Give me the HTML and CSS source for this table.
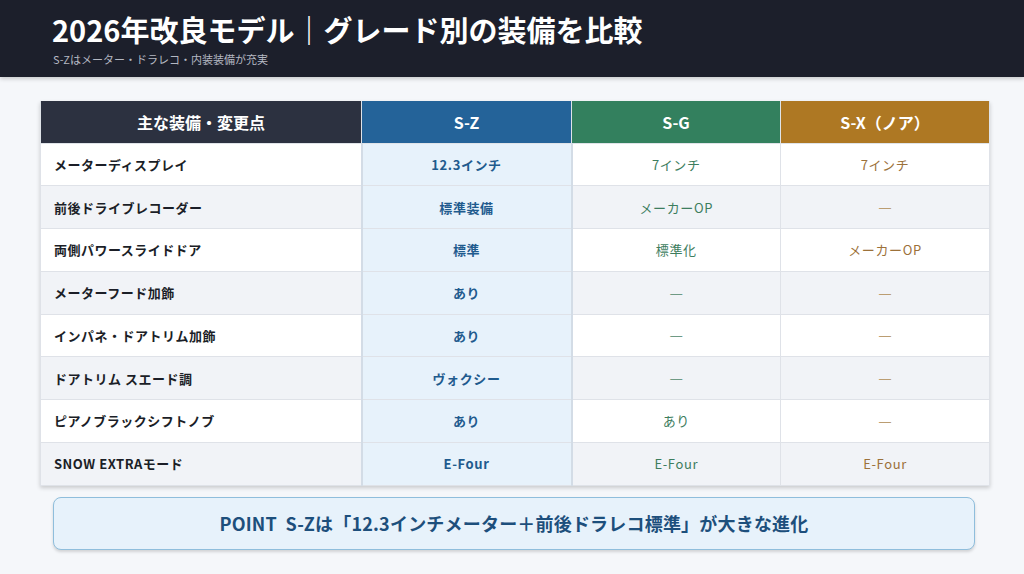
FILE: index.html
```html
<!DOCTYPE html>
<html lang="ja">
<head>
<meta charset="utf-8">
<link rel="stylesheet" href="styles.css">
</head>
<body>
<header class="top">
  <h1 class="title">2026年改良モデル｜グレード別の装備を比較</h1>
  <p class="sub">S-Zはメーター・ドラレコ・内装装備が充実</p>
</header>
<main class="main">
  <table class="cmp">
    <colgroup><col class="c1"><col class="c2"><col class="c3"><col class="c4"></colgroup>
    <thead>
      <tr><th class="h-l">主な装備・変更点</th><th class="h-z">S-Z</th><th class="h-g">S-G</th><th class="h-x">S-X（ノア）</th></tr>
    </thead>
    <tbody>
      <tr><td class="lab">メーターディスプレイ</td><td class="z">12.3インチ</td><td class="g">7インチ</td><td class="x">7インチ</td></tr>
      <tr><td class="lab">前後ドライブレコーダー</td><td class="z">標準装備</td><td class="g">メーカーOP</td><td class="x dash">—</td></tr>
      <tr><td class="lab">両側パワースライドドア</td><td class="z">標準</td><td class="g">標準化</td><td class="x">メーカーOP</td></tr>
      <tr><td class="lab">メーターフード加飾</td><td class="z">あり</td><td class="g dash">—</td><td class="x dash">—</td></tr>
      <tr><td class="lab">インパネ・ドアトリム加飾</td><td class="z">あり</td><td class="g dash">—</td><td class="x dash">—</td></tr>
      <tr><td class="lab">ドアトリム スエード調</td><td class="z">ヴォクシー</td><td class="g dash">—</td><td class="x dash">—</td></tr>
      <tr><td class="lab">ピアノブラックシフトノブ</td><td class="z">あり</td><td class="g">あり</td><td class="x dash">—</td></tr>
      <tr><td class="lab">SNOW EXTRAモード</td><td class="z">E-Four</td><td class="g">E-Four</td><td class="x">E-Four</td></tr>
    </tbody>
  </table>
  <div class="point">POINT&nbsp; S-Zは「12.3インチメーター＋前後ドラレコ標準」が大きな進化</div>
</main>
</body>
</html>
```
FILE: styles.css
```css
* { box-sizing: border-box; }
html, body { margin: 0; padding: 0; }
body {
  width: 1024px;
  height: 574px;
  overflow: hidden;
  background: #f5f7fa;
  font-family: "Noto Sans CJK JP", "Noto Sans", sans-serif;
  color: #1b1e27;
}
.top {
  height: 77px;
  background: #1c1f2b;
  padding: 11px 52px 0;
  box-shadow: 0 2px 4px rgba(0,0,0,0.18);
}
.title {
  margin: 0;
  font-size: 29px;
  line-height: 37px;
  font-weight: 700;
  color: #ffffff;
  letter-spacing: 0;
}
.sub {
  margin: 4px 0 0 1px;
  font-size: 11px;
  line-height: 14px;
  color: #b4b8c2;
}
.main {
  padding: 24px 35px 0 40px;
}
.cmp {
  width: 949px;
  border-collapse: collapse;
  table-layout: fixed;
  background: #fff;
  box-shadow: 0 2px 4px rgba(0,0,0,0.18);
}
.c1 { width: 321px; }
.c2 { width: 210px; }
.c3 { width: 209px; }
.c4 { width: 209px; }
.cmp th {
  height: 42px;
  font-size: 16px;
  font-weight: 700;
  color: #fff;
  text-align: center;
  padding: 0;
  border: 1px solid #dfe3e8;
  border-top: none;
}
.h-l { background: #2c3140; }
.h-z { background: #246399; }
.h-g { background: #33805e; }
.h-x { background: #ae7823; }
.cmp td {
  height: 42.75px;
  font-size: 13px;
  text-align: center;
  padding: 0;
  border: 1px solid #dfe2e8;
  letter-spacing: 0.6px;
}
.cmp tbody tr:nth-child(even) td { background: #f1f3f7; }
.cmp td.lab {
  text-align: left;
  padding-left: 13px;
  font-weight: 700;
  color: #1b1e27;
  letter-spacing: 0.5px;
}
.cmp td.z, .cmp tbody tr:nth-child(even) td.z {
  background: #e7f2fb;
  color: #1f5b8e;
  font-weight: 700;
  border-left: 2px solid #d3dce6;
  border-right: 2px solid #d3dce6;
}
.cmp td.g { color: #3d7d5e; }
.cmp td.x { color: #9c713a; }
.cmp td.dash {
  font-family: "Noto Sans", "DejaVu Sans", sans-serif;
  letter-spacing: 0;
}
.cmp td.g.dash { color: #6f9a85; }
.cmp td.x.dash { color: #bb9d72; }
.point {
  margin: 11px 0 0 13px;
  width: 922px;
  height: 53px;
  background: #e7f2fb;
  border: 1px solid #8fbedc;
  border-radius: 8px;
  box-shadow: 0 2px 3px rgba(0,0,0,0.15);
  display: flex;
  align-items: center;
  justify-content: center;
  font-size: 18px;
  font-weight: 700;
  color: #1d4f7c;
  letter-spacing: 0.2px;
}
```
